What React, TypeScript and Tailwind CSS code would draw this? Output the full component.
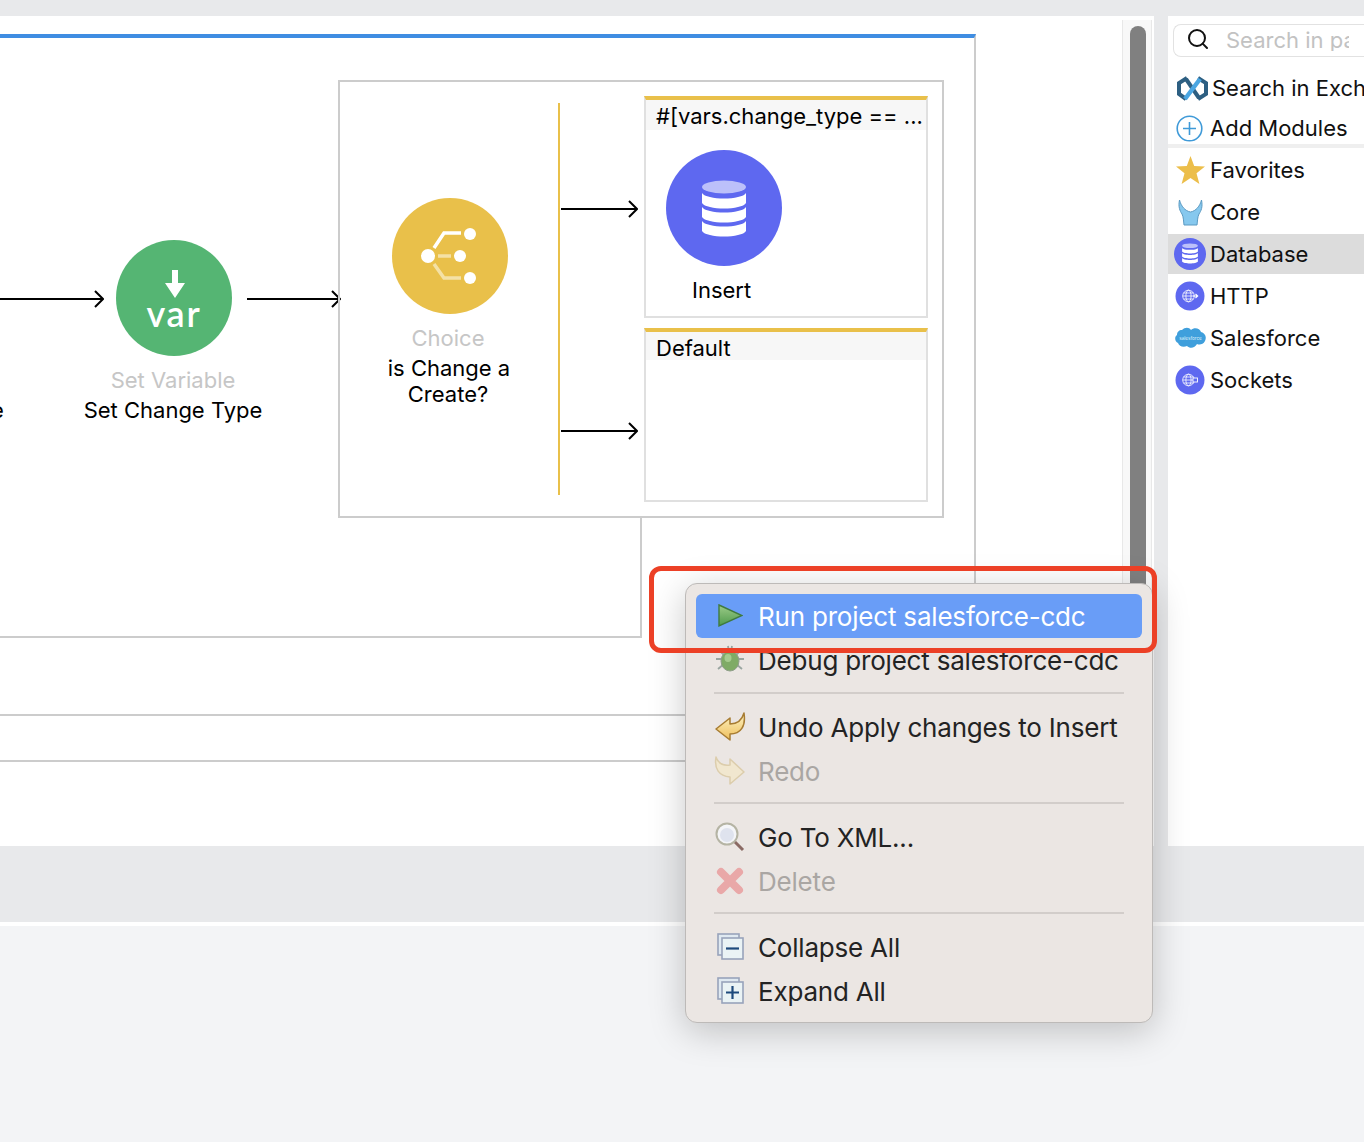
import { Search } from 'lucide-react'
import type { ReactNode } from 'react'

// Flow arrow with an open head, drawn on the canvas
function Arrow({ className, width }: { className: string; width: number }) {
  return (
    <svg className={`shrink-0 ${className}`} width={width} height={20} viewBox={`0 0 ${width} 20`} fill="none">
      <line x1={0} y1={10} x2={width - 1} y2={10} stroke="#000" strokeWidth={2} />
      <path d={`M${width - 9} 2 L${width - 1} 10 L${width - 9} 18`} stroke="#000" strokeWidth={2} />
    </svg>
  )
}

function DbGlyph() {
  return (
    <>
      <ellipse cx={58} cy={37} rx={22} ry={6.5} fill="#bcc0fa" />
      <path d="M36 43 C40 50.3 76 50.3 80 43 V53 C76 60.3 40 60.3 36 53 Z" fill="#fff" />
      <path d="M36 57 C40 64.3 76 64.3 80 57 V67 C76 74.3 40 74.3 36 67 Z" fill="#fff" />
      <path d="M36 71 C40 78.3 76 78.3 80 71 V81 C76 88.3 40 88.3 36 81 Z" fill="#fff" />
    </>
  )
}

function GlobeBadge({ socket }: { socket?: boolean }) {
  return (
    <svg width={30} height={30} viewBox="0 0 30 30" fill="none">
      <circle cx={15} cy={15} r={14.5} fill="#5e68f0" />
      <g stroke="#fff" strokeWidth={0.8}>
        <circle cx={13.5} cy={15} r={5.8} />
        <ellipse cx={13.5} cy={15} rx={2.6} ry={5.8} />
        <line x1={7.7} y1={15} x2={19.3} y2={15} />
        <line x1={8.6} y1={12} x2={18.4} y2={12} />
        <line x1={8.6} y1={18} x2={18.4} y2={18} />
      </g>
      {socket ? (
        <rect x={18} y={13} width={4.5} height={4} fill="#5e68f0" stroke="#fff" strokeWidth={0.9} />
      ) : (
        <path d="M18 15 H22.5 M20.5 13 L22.7 15 L20.5 17" stroke="#fff" strokeWidth={1.1} />
      )}
    </svg>
  )
}

function PaletteRow({ icon, label, active }: { icon: ReactNode; label: string; active?: boolean }) {
  return (
    <div className={active ? 'my-px flex h-10 items-center bg-[#dcdcdc]' : 'flex h-[42px] items-center'}>
      <div className="flex w-[42px] shrink-0 items-center justify-center pl-[2px]">{icon}</div>
      <span className="text-[22px] leading-none whitespace-nowrap text-[#111]">{label}</span>
    </div>
  )
}

function MenuRow({ icon, label, tone }: { icon: ReactNode; label: string; tone?: 'active' | 'off' }) {
  const color = tone === 'active' ? 'bg-[#699df7] text-white rounded-md' : tone === 'off' ? 'text-[#aaa6a3]' : 'text-[#232323]'
  return (
    <div className={`flex h-11 items-center pl-[18px] ${color}`}>
      <div className="flex w-8 shrink-0 items-center justify-center">{icon}</div>
      <span className="mt-px ml-3 text-[26px] leading-none tracking-[-0.2px] whitespace-nowrap">{label}</span>
    </div>
  )
}

function MenuSeparator({ className }: { className: string }) {
  return <div className={`mx-[18px] h-[2px] bg-[#d2cdca] ${className}`} />
}

function StackBox({ plus }: { plus?: boolean }) {
  return (
    <svg width={28} height={28} viewBox="0 0 28 28" fill="none">
      <rect x={2} y={1} width={21} height={21} fill="#dfe9f1" stroke="#98a3bb" strokeWidth={1.6} />
      <rect x={6} y={5} width={21} height={21} fill="#eaf3f5" stroke="#98a3bb" strokeWidth={1.6} />
      <path d={plus ? 'M10 15.5 H23 M16.5 9 V22' : 'M10 15.5 H23'} stroke="#1e4a7c" strokeWidth={2.2} />
    </svg>
  )
}

export default function App() {
  return (
    <div className="relative flex h-[1142px] w-[1364px] flex-col overflow-hidden bg-[#f3f4f6] [font-family:Inter,'Noto_Sans',sans-serif]">
      <div className="h-4 bg-[#e8e9eb]" />

      <div className="flex h-[830px] bg-[#e8e9eb]">
        {/* Flow canvas */}
        <div className="relative w-[1154px] shrink-0 overflow-hidden bg-white">
          <div className="absolute top-[18px] left-0 h-[564px] w-[976px] border-t-4 border-r-2 border-t-[#3f8de2] border-r-[#ccc]" />

          {/* Outer scope bottom edges */}
          <div className="absolute top-[502px] left-0 h-[120px] w-[642px] border-r-2 border-b-2 border-[#ccc]" />
          <div className="absolute top-[698px] left-0 h-12 w-[700px] border-y-2 border-[#ccc]" />

          {/* Scrollbar */}
          <div className="absolute top-1 left-[1122px] h-[826px] w-[30px] border-x border-[#e8e8e8] bg-[#f8f8f8] pt-[6px] pl-[7px]">
            <div className="h-[600px] w-4 rounded-full bg-[#808080]" />
          </div>

          <Arrow className="absolute top-[273px] left-0" width={104} />
          <Arrow className="absolute top-[273px] left-[247px]" width={94} />

          {/* Clipped label of the previous node */}
          <span className="absolute top-[382px] left-[-9px] text-[22px] leading-[24px] text-black">e</span>

          {/* Set Variable */}
          <div className="absolute top-[224px] left-[44px] flex w-[260px] flex-col items-center">
            <div className="relative h-[116px] w-[116px] rounded-full bg-[#55b573]">
              <svg className="absolute top-0 left-0" width={116} height={116} viewBox="0 0 116 116">
                <path d="M56 30 H62 V43 H69 L59 58 L49 43 H56 Z" fill="#fff" />
              </svg>
              <span className="absolute top-[53px] left-0 w-full text-center text-[36px] leading-[40px] font-semibold tracking-[0.05em] text-white [font-family:Lato,sans-serif]">
                var
              </span>
            </div>
            <div className="mt-[11px] pr-[2px] text-center text-[22px] leading-[26px]">
              <p className="text-[#c6c6c6]">Set Variable</p>
              <p className="mt-1 text-black">Set Change Type</p>
            </div>
          </div>

          {/* Choice scope */}
          <div className="absolute top-16 left-[338px] flex h-[438px] w-[606px] border-2 border-[#ccc]">
            <div className="flex w-[218px] shrink-0 flex-col items-center pt-[116px]">
              <div className="ml-[2px] h-[116px] w-[116px] rounded-full bg-[#e9c04a]">
                <svg width={116} height={116} viewBox="0 0 116 116" fill="none">
                  <circle cx={36} cy={58} r={7} fill="#fff" />
                  <circle cx={68} cy={58} r={6} fill="#fff" />
                  <circle cx={78} cy={36} r={6} fill="#fff" />
                  <circle cx={78} cy={80} r={6} fill="#fff" />
                  <path d="M42 50 L52 35 H69" stroke="#fff" strokeWidth={3.5} />
                  <path d="M46 58 H59" stroke="#f4e1a6" strokeWidth={3.5} />
                  <path d="M42 66 L52 80 H69" stroke="#f4e1a6" strokeWidth={3.5} />
                </svg>
              </div>
              <div className="mt-[11px] text-center text-[22px] leading-[26px]">
                <p className="pr-[2px] text-[#c6c6c6]">Choice</p>
                <p className="mt-1 text-black">is Change a</p>
                <p className="pr-[2px] text-black">Create?</p>
              </div>
            </div>

            <div className="my-[21px] w-[2px] shrink-0 bg-[#e9c04a]" />

            <div className="flex flex-col gap-[10px] pt-[14px] pl-px">
              <div className="flex">
                <Arrow className="mt-[103px] mr-[6px]" width={77} />
                <div className="h-[222px] w-[284px] border-x-2 border-t-4 border-b-2 border-[#e0e0e0] border-t-[#e9c04a]">
                  <div className="h-[30px] bg-[#f7f7f7] pl-[10px] text-[22px] leading-[33px] whitespace-nowrap text-black">
                    #[vars.change_type == ...
                  </div>
                  <div className="mt-5 ml-5 h-[116px] w-[116px] rounded-full bg-[#5e68f0]">
                    <svg width={116} height={116} viewBox="0 0 116 116">
                      <DbGlyph />
                    </svg>
                  </div>
                  <p className="mt-[11px] ml-[46px] text-[22px] leading-[26px] text-black">Insert</p>
                </div>
              </div>
              <div className="flex">
                <Arrow className="mt-[93px] mr-[6px]" width={77} />
                <div className="h-[174px] w-[284px] border-x-2 border-t-4 border-b-2 border-[#e0e0e0] border-t-[#e9c04a]">
                  <div className="h-[28px] bg-[#f7f7f7] pl-[10px] text-[22px] leading-[33px] whitespace-nowrap text-black">Default</div>
                </div>
              </div>
            </div>
          </div>
        </div>

        <div className="w-[14px] shrink-0" />

        {/* Palette */}
        <div className="min-w-0 flex-1 overflow-hidden bg-white">
          <div className="mt-2 ml-[5px] flex h-[33px] items-center rounded-l-lg border border-r-0 border-[#e2e2e2] pl-[12px]">
            <Search size={24} strokeWidth={2} className="mb-1 shrink-0 text-[#111]" />
            <span className="mb-[2px] ml-4 w-[123px] overflow-hidden text-[22px] leading-none whitespace-nowrap text-[#c2c2c2]">
              Search in palette
            </span>
          </div>
          <div className="mt-[11px] flex h-10 items-center pl-2">
            <svg width={33} height={27} viewBox="0 0 33 27" fill="none" className="shrink-0">
              <path d="M11 3 L3 8 V19 L10 24" stroke="#2d5f82" strokeWidth={4} />
              <path d="M22 3 L30 8 V19 L22 24" stroke="#2d5f82" strokeWidth={4} />
              <path d="M10 4 L23 23" stroke="#2d5f82" strokeWidth={4} />
              <path d="M9 24 L24 4" stroke="#4aa6e2" strokeWidth={4.4} />
            </svg>
            <span className="ml-[3px] text-[22px] leading-none whitespace-nowrap text-[#111]">Search in Exchange</span>
          </div>
          <div className="flex h-9 items-center pt-1 pl-[8px]">
            <svg width={27} height={27} viewBox="0 0 27 27" fill="none" className="shrink-0">
              <circle cx={13.5} cy={13.5} r={12.3} stroke="#3f9ad8" strokeWidth={1.6} />
              <path d="M13.5 7 V20 M7 13.5 H20" stroke="#3f9ad8" strokeWidth={1.6} />
            </svg>
            <span className="ml-[7px] text-[22px] leading-none whitespace-nowrap text-[#111]">Add Modules</span>
          </div>
          <div className="h-1 bg-[#efefef]" />
          <div className="mt-px">
            <PaletteRow
              label="Favorites"
              icon={
                <svg width={29} height={28} viewBox="0 0 29 28">
                  <path d="M14.5 0 L18.2 10 L29 10.6 L20.5 17.2 L23.4 28 L14.5 22 L5.6 28 L8.5 17.2 L0 10.6 L10.8 10 Z" fill="#ecbe4a" />
                </svg>
              }
            />
            <PaletteRow
              label="Core"
              icon={
                <svg width={25} height={27} viewBox="0 0 25 27">
                  <path d="M1.5 1 C3 7 7 12 12.5 13 C18 12 22 7 23.5 1 C25 8 23 12 21 15 C19.5 18 19.5 22 19 26 H6 C5.5 22 5.5 18 4 15 C2 12 0 8 1.5 1 Z" fill="#86c8ee" stroke="#5b9ac2" strokeWidth={1} />
                </svg>
              }
            />
            <PaletteRow
              active
              label="Database"
              icon={
                <svg width={32} height={32} viewBox="0 0 116 116">
                  <circle cx={58} cy={58} r={58} fill="#5e68f0" />
                  <g transform="translate(58 58) scale(1.3) translate(-58 -60)">
                    <DbGlyph />
                  </g>
                </svg>
              }
            />
            <PaletteRow label="HTTP" icon={<GlobeBadge />} />
            <PaletteRow
              label="Salesforce"
              icon={
                <svg width={31} height={22} viewBox="0 0 31 22">
                  <path d="M7 3 C10 0 14 0 16 3 C19 0 25 1 26 5 C30 6 32 10 30 14 C28 18 24 18 22 17 C20 21 15 22 12 19 C8 21 4 19 3 16 C0 15 -1 10 2 8 C2 5 4 3 7 3 Z" fill="#3f9fdc" />
                  <text x={15.5} y={12.5} textAnchor="middle" fontSize={4.6} fill="#dff1fb">
                    salesforce
                  </text>
                </svg>
              }
            />
            <PaletteRow label="Sockets" icon={<GlobeBadge socket />} />
          </div>
        </div>
      </div>

      <div className="h-[76px] bg-[#e8e9eb]" />
      <div className="h-1 bg-white" />
      <div className="flex-1 bg-[#f3f4f6]" />

      {/* Context menu */}
      <div className="absolute top-[583px] left-[685px] h-[440px] w-[468px] rounded-xl border border-[#bdbab8] bg-[#ebe6e3] px-[10px] pt-[10px] shadow-[0_8px_36px_rgba(0,0,0,0.22)]">
        <MenuRow
          tone="active"
          label="Run project salesforce-cdc"
          icon={
            <svg width={26} height={24} viewBox="0 0 26 24">
              <defs>
                <linearGradient id="runFill" x1="0" y1="0" x2="0" y2="1">
                  <stop offset="0" stopColor="#9ccb88" />
                  <stop offset="1" stopColor="#4f9a4c" />
                </linearGradient>
              </defs>
              <path d="M2 1 L25 11.5 L2 22 Z" fill="url(#runFill)" stroke="#3f7a3f" strokeWidth={1.4} />
            </svg>
          }
        />
        <MenuRow
          label="Debug project salesforce-cdc"
          icon={
            <svg width={32} height={32} viewBox="0 0 32 32" fill="none">
              <g stroke="#9aa5a0" strokeWidth={1.8}>
                <path d="M5 6 L11 12 M27 6 L21 12 M2 15 H8 M30 15 H24 M4 25 L10 20 M28 25 L22 20 M14 2 L15 8 M18 2 L17 8" />
              </g>
              <ellipse cx={16} cy={17} rx={9} ry={10} fill="#7fab66" stroke="#8e9e88" strokeWidth={1} />
              <ellipse cx={14} cy={14} rx={3.5} ry={4} fill="#a6cb8e" />
            </svg>
          }
        />
        <MenuSeparator className="mt-[10px] mb-[11px]" />
        <MenuRow
          label="Undo Apply changes to Insert"
          icon={
            <svg width={32} height={30} viewBox="0 0 32 30">
              <defs>
                <linearGradient id="undoFill" x1="0" y1="0" x2="0" y2="1">
                  <stop offset="0" stopColor="#fdf3c4" />
                  <stop offset="1" stopColor="#eebf5c" />
                </linearGradient>
              </defs>
              <path d="M2 17 L16 6 V12 C23 12 28 8 30 1 C32 14 27 22 16 22 V28 Z" fill="url(#undoFill)" stroke="#a77c32" strokeWidth={1.5} strokeLinejoin="round" />
            </svg>
          }
        />
        <MenuRow
          tone="off"
          label="Redo"
          icon={
            <svg width={32} height={30} viewBox="0 0 32 30">
              <path d="M30 16 L16 3 V9 C9 10 4 7 2 1 C0 13 5 20 16 21 V28 Z" fill="#f1e7cf" stroke="#dccdac" strokeWidth={1.5} strokeLinejoin="round" />
            </svg>
          }
        />
        <MenuSeparator className="mt-[9px] mb-[11px]" />
        <MenuRow
          label="Go To XML..."
          icon={
            <svg width={32} height={32} viewBox="0 0 32 32" fill="none">
              <path d="M20 20 L29 29" stroke="#8a6a64" strokeWidth={3} />
              <circle cx={13} cy={13} r={10.5} fill="#f4f5f8" stroke="#b5b4a4" strokeWidth={2} />
              <circle cx={13} cy={14} r={7} fill="#dfe3ee" />
            </svg>
          }
        />
        <MenuRow
          tone="off"
          label="Delete"
          icon={
            <svg width={28} height={28} viewBox="0 0 28 28">
              <path d="M5 5 L23 23 M23 5 L5 23" stroke="#e9a8a8" strokeWidth={8} strokeLinecap="round" />
            </svg>
          }
        />
        <MenuSeparator className="mt-[9px] mb-[11px]" />
        <MenuRow label="Collapse All" icon={<StackBox />} />
        <MenuRow label="Expand All" icon={<StackBox plus />} />
      </div>

      {/* Red callout drawn over the menu */}
      <div className="absolute top-[566px] left-[649px] h-[87px] w-[508px] rounded-xl border-[5px] border-[#ec4026]" />
    </div>
  )
}
